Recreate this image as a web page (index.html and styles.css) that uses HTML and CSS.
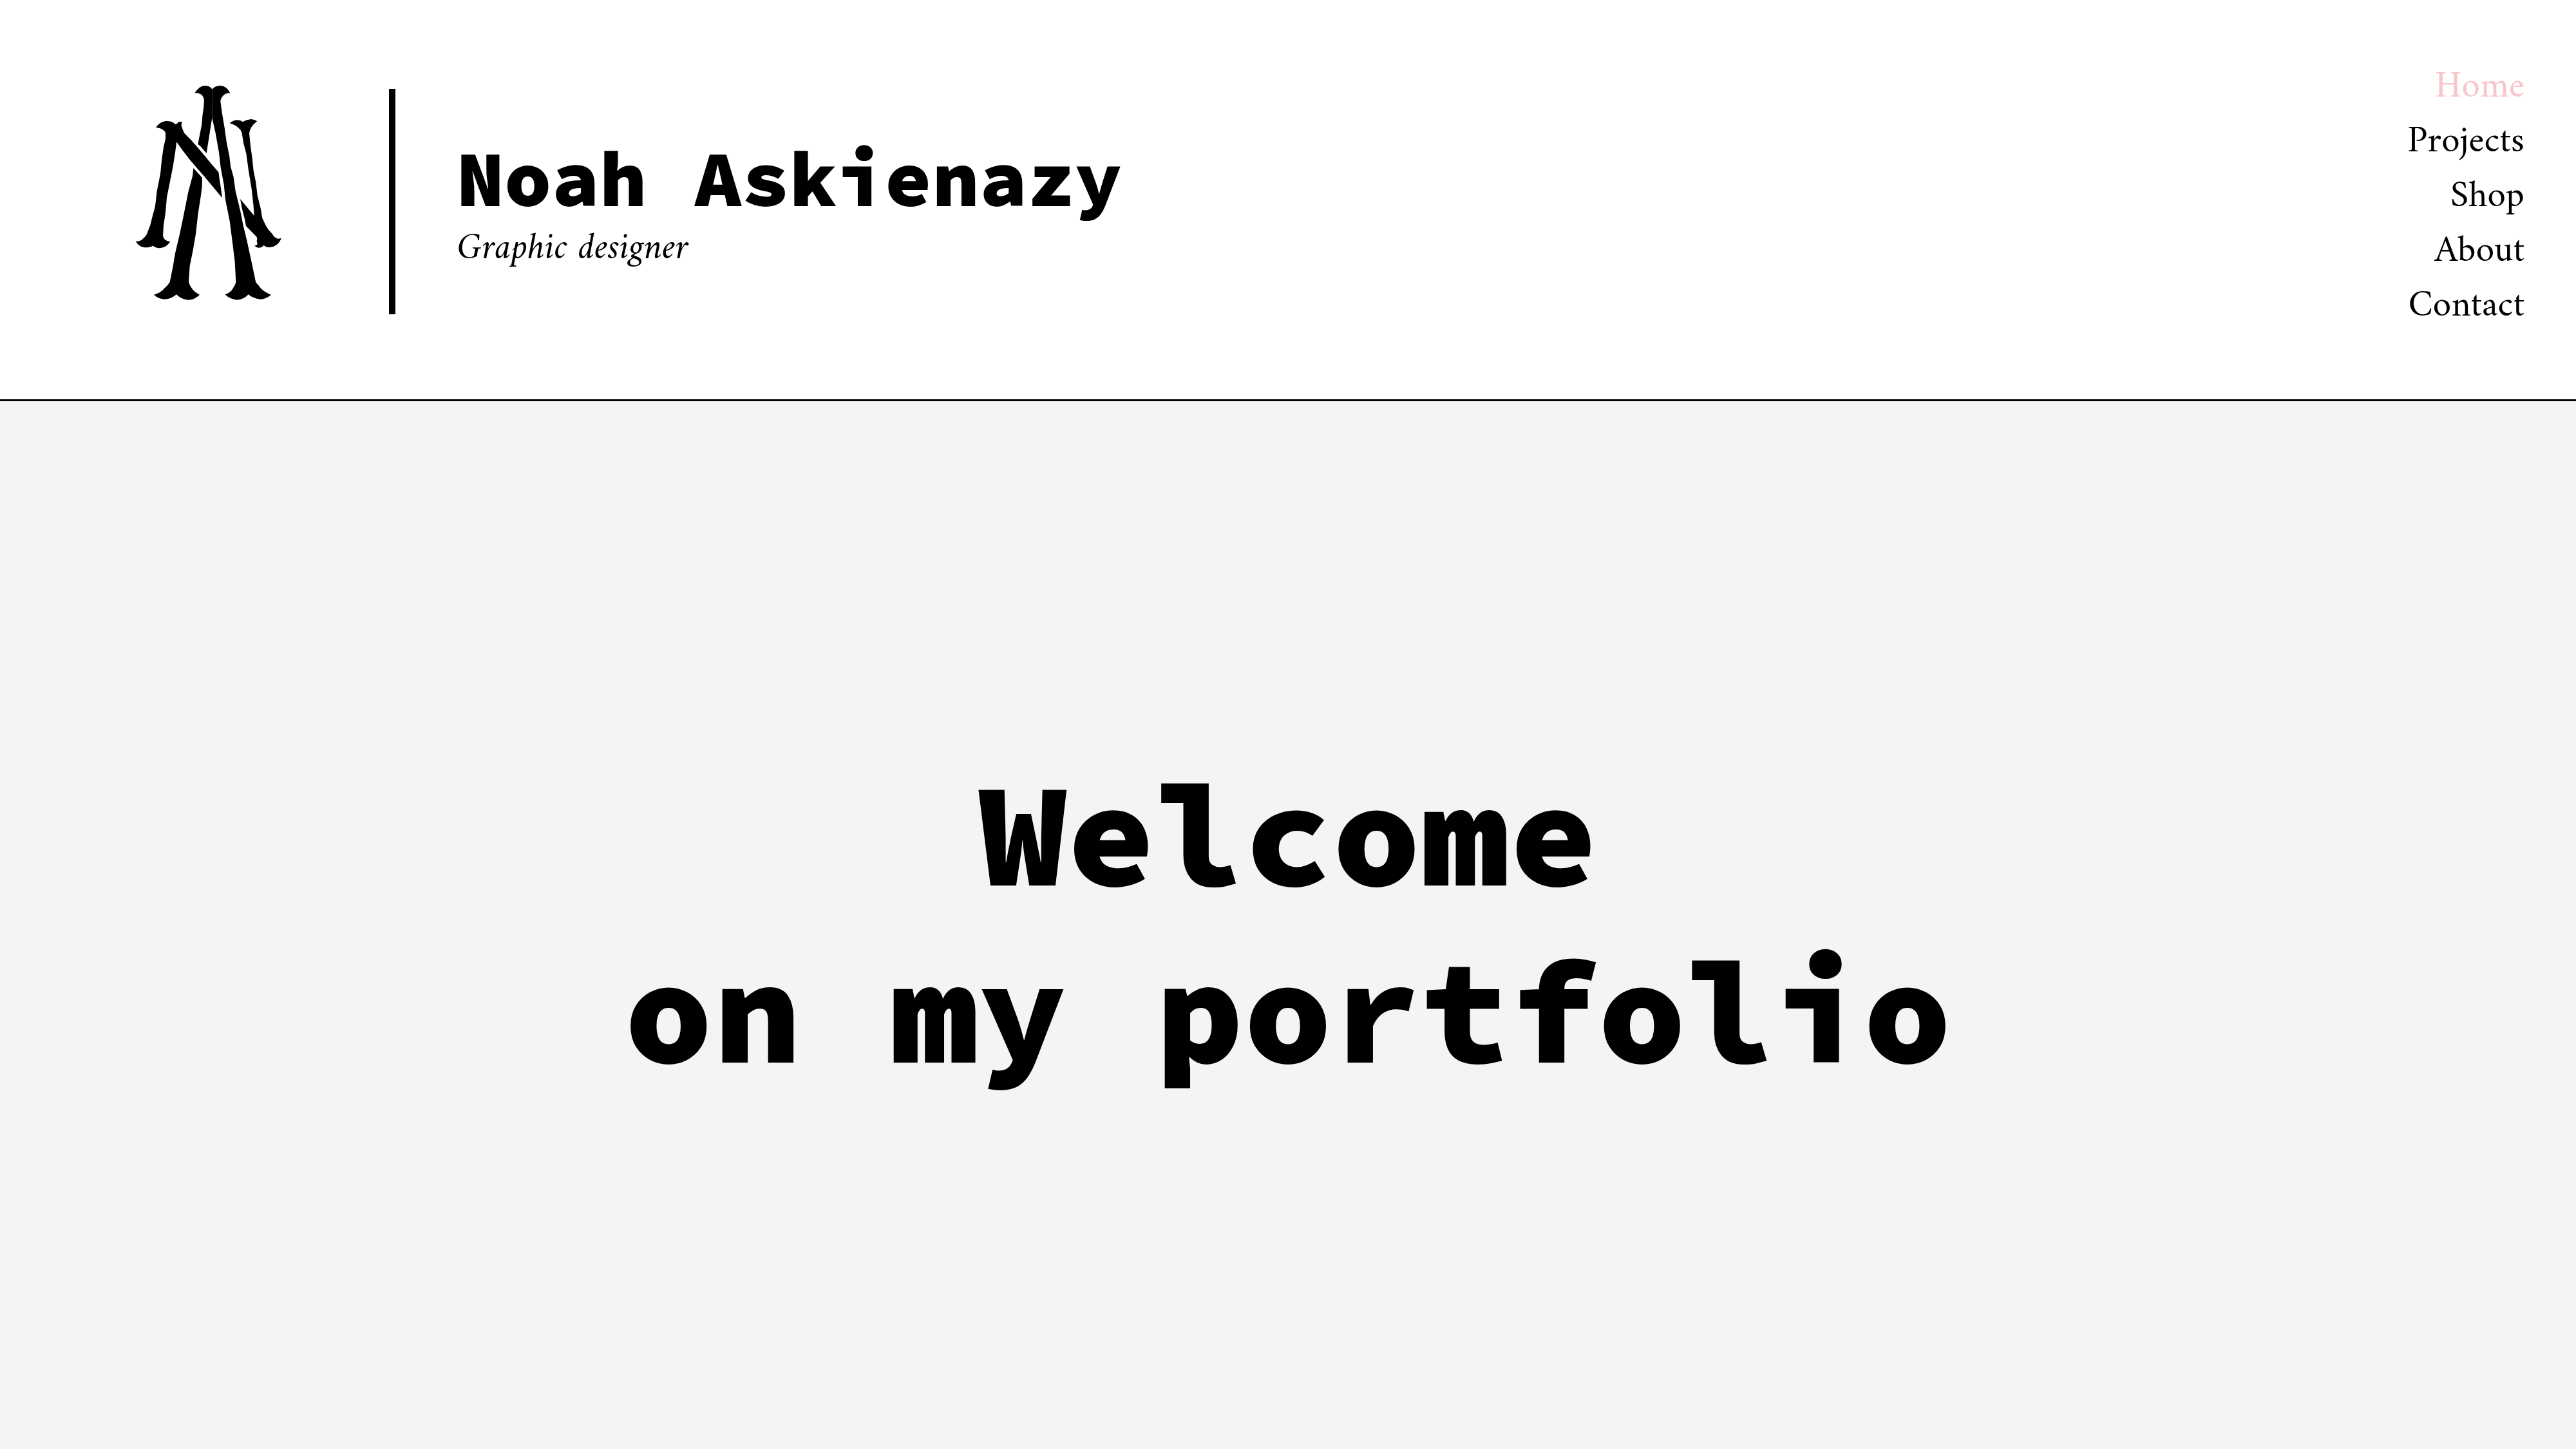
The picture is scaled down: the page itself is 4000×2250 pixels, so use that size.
FILE: index.html
```html
<!DOCTYPE html>
<html lang="en">
<head>
<meta charset="utf-8">
<meta name="viewport" content="width=device-width, initial-scale=1">
<title>Noah Askienazy – Graphic designer</title>
<link rel="stylesheet" href="styles.css">
</head>
<body>
<header class="header">
  <div class="brand">
    <svg class="logo" viewBox="0 0 810 1140" role="img" aria-label="NA monogram">
      <!-- A: left leg, upper part -->
      <path d="M419 86Q408 70 385 69Q358 70 337 103Q356 103 368 110Q380 121 381 140L378 175L373 210L370 250L352 342L363 350L392 384L418 219Z"/>
      <!-- A: left leg, lower part -->
      <path d="M331 453L372 498L371 540L366 580L352 670L342 760L330 830L314 910L309 984Q313 998 322 1011Q334 1030 360 1043Q336 1067 307 1067Q276 1066 252 1042Q228 1063 197 1064Q167 1062 147 1043Q180 1033 195 1014Q212 1000 221 984L235 916L246 850L265 770L285 675L307 565L327 490Z"/>
      <!-- A: right leg -->
      <path d="M418 86Q432 70 455 69Q486 70 502 103Q484 103 471 114Q458 127 457 143L465 200L476 265L485 330L499 400L504 445L518 495L527 560L549 650L563 720L580 790L605 905L622 986Q635 998 645 1013Q664 1032 693 1043Q670 1063 642 1064Q610 1061 587 1042Q564 1067 534 1067Q503 1065 478 1042Q506 1033 516 1012Q527 997 529 984L524 890L513 800L500 700L480 600L473 530L458 450L450 380L434 290L418 219Z"/>
      <!-- N: left stem -->
      <path d="M156 264Q174 236 205 234Q235 232 249 252L253 330L246 380L236 445L223 510L207 590L201 660L192 720L189 768Q193 792 223 795Q206 823 174 826Q154 824 142 815Q128 823 105 823Q78 820 62 794Q85 796 97 781Q112 770 118 750Q132 720 137 690L153 630L161 560L177 480L184 410L192 355L201 317V288Q190 267 156 264Z"/>
      <!-- N: diagonal, upper part -->
      <path d="M245 250Q256 247 263 238L280 237Q272 245 277 260Q283 282 291 293L322 324L350 356L382 394L415 434L448 472L454 515L459 546L465 592L415 532L380 490L350 456L316 416L280 370L252 330Z"/>
      <!-- N: right stem and diagonal foot -->
      <path d="M500 244Q515 230 536 229Q552 231 562 238Q575 228 600 225Q614 226 628 235Q596 257 591 291L597 350L604 400L611 465L622 520L629 580L644 640L652 686Q665 717 681 741L698 759Q708 779 724 782L741 780Q725 819 687 822Q667 822 659 812Q650 825 632 824Q620 822 615 814Q628 815 629 803Q624 795 628 783Q627 772 618 766L576 723L570 690L558 645L549 597L614 675L611 630L602 550L588 465L577 385L565 340L557 290Q547 258 500 244Z"/>
    </svg>
    <div class="divider"></div>
    <div class="identity">
      <p class="name">Noah Askienazy</p>
      <p class="role">Graphic designer</p>
    </div>
  </div>
  <nav class="nav" aria-label="Main">
    <a class="nav-link active" href="#" aria-current="page">Home</a>
    <a class="nav-link" href="#projects">Projects</a>
    <a class="nav-link" href="#shop">Shop</a>
    <a class="nav-link" href="#about">About</a>
    <a class="nav-link" href="#contact">Contact</a>
  </nav>
</header>
<main class="hero">
  <h1 class="welcome">Welcome<br>on my portfolio</h1>
</main>
</body>
</html>
```
FILE: styles.css
```css
* {
  box-sizing: border-box;
}

body {
  display: flex;
  flex-direction: column;
  min-height: 100vh;
  margin: 0;
  background: #f4f4f4;
  color: #000;
  font-family: Amiri, "Crimson Text", "Liberation Serif", serif;
}

.header {
  display: flex;
  justify-content: space-between;
  align-items: flex-start;
  padding: 90px 80px 101px 190px;
  border-bottom: 3px solid #000;
  background: #fff;
}

.brand {
  display: flex;
  align-items: center;
  padding-top: 20px;
}

.logo {
  width: 270px;
  height: 380px;
}

.divider {
  width: 10px;
  height: 350px;
  margin: 26px 95px 0 144px;
  background: #000;
}

.identity {
  padding-top: 36px;
}

.name,
.role {
  margin: 0;
}

.name {
  margin-bottom: 18px;
  font: 900 123px/120px "Source Code Pro", "DejaVu Sans Mono", monospace;
}

.role {
  font-size: 58px;
  font-style: italic;
  line-height: 64px;
}

.nav {
  display: flex;
  flex-direction: column;
  align-items: flex-end;
  padding-top: 4px;
}

.nav-link {
  color: #000;
  font-size: 58px;
  line-height: 85px;
  text-decoration: none;
}

.nav-link.active {
  color: #f9c5cd;
}

.hero {
  display: flex;
  flex: 1;
  align-items: center;
  justify-content: center;
  padding-bottom: 9px;
}

.welcome {
  margin: 0;
  font: 900 229px/275px "Source Code Pro", "DejaVu Sans Mono", monospace;
  text-align: center;
}
```
